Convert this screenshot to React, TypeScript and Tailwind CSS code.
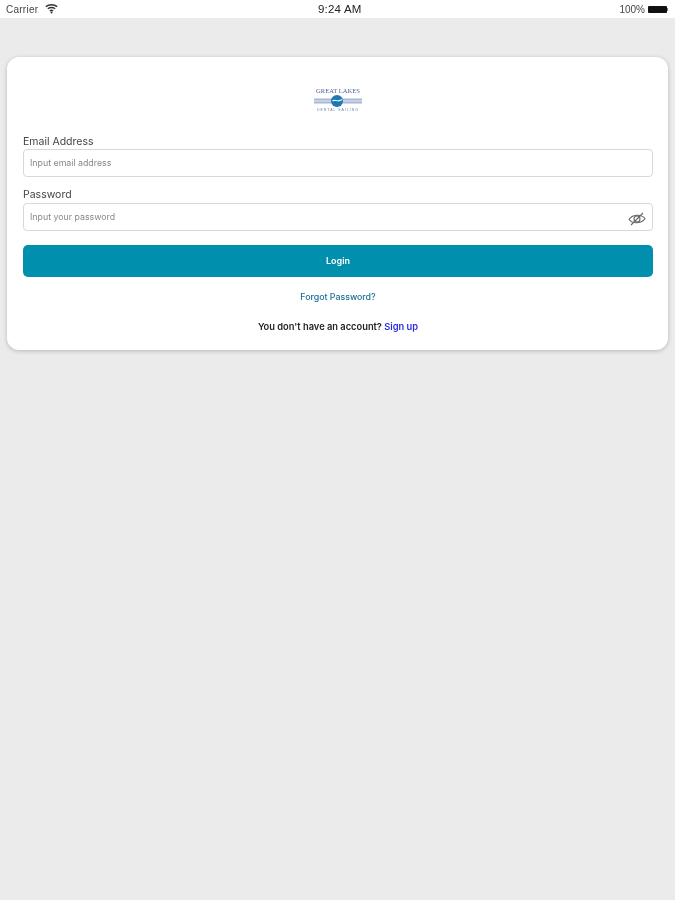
import React from "react";

function Wifi() {
  return (
    <svg width="13" height="10" viewBox="0 0 13 10" fill="none" stroke="#333" strokeWidth="1.4" className="ml-[1px]">
      <path d="M0.8 2.6 C4 0.2 9 0.2 12.2 2.6" />
      <path d="M2.8 4.8 C5 3.2 8 3.2 10.2 4.8" />
      <path d="M4.8 6.8 C5.8 6.2 7.2 6.2 8.2 6.8" />
      <circle cx="6.5" cy="8.4" r="1" fill="#333" stroke="none" />
    </svg>
  );
}

function EyeOff() {
  return (
    <svg width="18" height="14" viewBox="0 0 18 14" fill="none" stroke="#666" strokeWidth="1.1" className="mt-[4px]">
      <path d="M1 7.5 C4 2.5 13 1.5 17 6.5 C14 11.5 5 12.5 1 7.5 Z" />
      <circle cx="9" cy="7" r="3" />
      <path d="M3 13 L15 1" />
    </svg>
  );
}

function Logo() {
  return (
    <div className="flex flex-col items-center w-[48px] h-[26px] mb-[22px]">
      <div className="text-[6.6px] leading-[7px] text-[#4d6497] whitespace-nowrap" style={{ fontFamily: '"Liberation Serif", serif' }}>
        GREAT LAKES
      </div>
      <svg width="48" height="12" viewBox="0 0 48 12" className="mt-[1px]">
        <rect x="0" y="3.5" width="48" height="5" fill="#a9b8d4" />
        <rect x="0" y="5.4" width="48" height="1.2" fill="#dbe2ee" />
        <circle cx="23" cy="6" r="6" fill="#1f77b0" />
        <path d="M18.5 6 C21 3.5 24 8 28 4.5" stroke="#e6f2fa" strokeWidth="1.2" fill="none" />
      </svg>
      <div className="text-[3.5px] leading-[5px] tracking-[1px] text-[#6f82a8] whitespace-nowrap mt-[1px]" style={{ fontFamily: '"Liberation Sans", sans-serif' }}>
        DENTAL SAILING
      </div>
    </div>
  );
}

export default function App() {
  return (
    <div className="min-h-[900px] bg-[#ebebeb] overflow-hidden">
      <div className="min-h-[900px] bg-[#ebebeb] font-['Inter',sans-serif] blur-[0.5px]">
        <div className="h-[18px] bg-white flex items-center justify-between pl-[6px] pr-[7px] relative text-[10px] text-[#444] font-['Liberation_Sans',sans-serif]">
          <div className="flex items-center gap-[6px]">
            <span className="tracking-[0.25px]">Carrier</span>
            <Wifi />
          </div>
          <span className="absolute left-[318px] top-[3px] text-[11.5px] leading-[13px] text-[#222] tracking-[0.2px]">9:24 AM</span>
          <div className="flex items-center gap-[3px]">
            <span>100%</span>
            <div className="w-[19px] h-[7px] bg-[#111] rounded-[1px]" />
            <div className="w-[1px] h-[3px] bg-[#777] -ml-[3px]" />
          </div>
        </div>
        <div className="px-[7px] pt-[39px]">
          <div className="h-[293px] bg-white rounded-[12px] shadow-[0_1px_4px_rgba(0,0,0,0.22)] pl-[16px] pr-[15px] pt-[30px] flex flex-col">
            <div className="flex justify-center">
              <Logo />
            </div>
            <label className="text-[10.5px] leading-[13px] text-[#444] mb-[1px]">Email Address</label>
            <div className="h-[28px] border border-[#d8d8d8] rounded-[4px] flex items-center pl-[6px] text-[8.8px] text-[#888]">
              Input email address
            </div>
            <label className="text-[10.5px] leading-[13px] text-[#444] mt-[11px] mb-[2px]">Password</label>
            <div className="h-[28px] border border-[#d8d8d8] rounded-[4px] flex items-center justify-between pl-[6px] pr-[6px] text-[8.8px] text-[#888]">
              <span>Input your password</span>
              <EyeOff />
            </div>
            <div className="mt-[14px] h-[32px] bg-[#0090ae] rounded-[5px] flex items-center justify-center text-[9px] font-semibold text-white">
              Login
            </div>
            <div className="mt-[14px] text-center text-[8.8px] leading-[12px] font-medium text-[#1a6f96]">Forgot Password?</div>
            <div className="mt-[18px] text-center text-[9.3px] leading-[12px] font-semibold text-[#222]">
              You don't have an account? <span className="text-[#2a2ae0]">Sign up</span>
            </div>
          </div>
        </div>
      </div>
    </div>
  );
}
